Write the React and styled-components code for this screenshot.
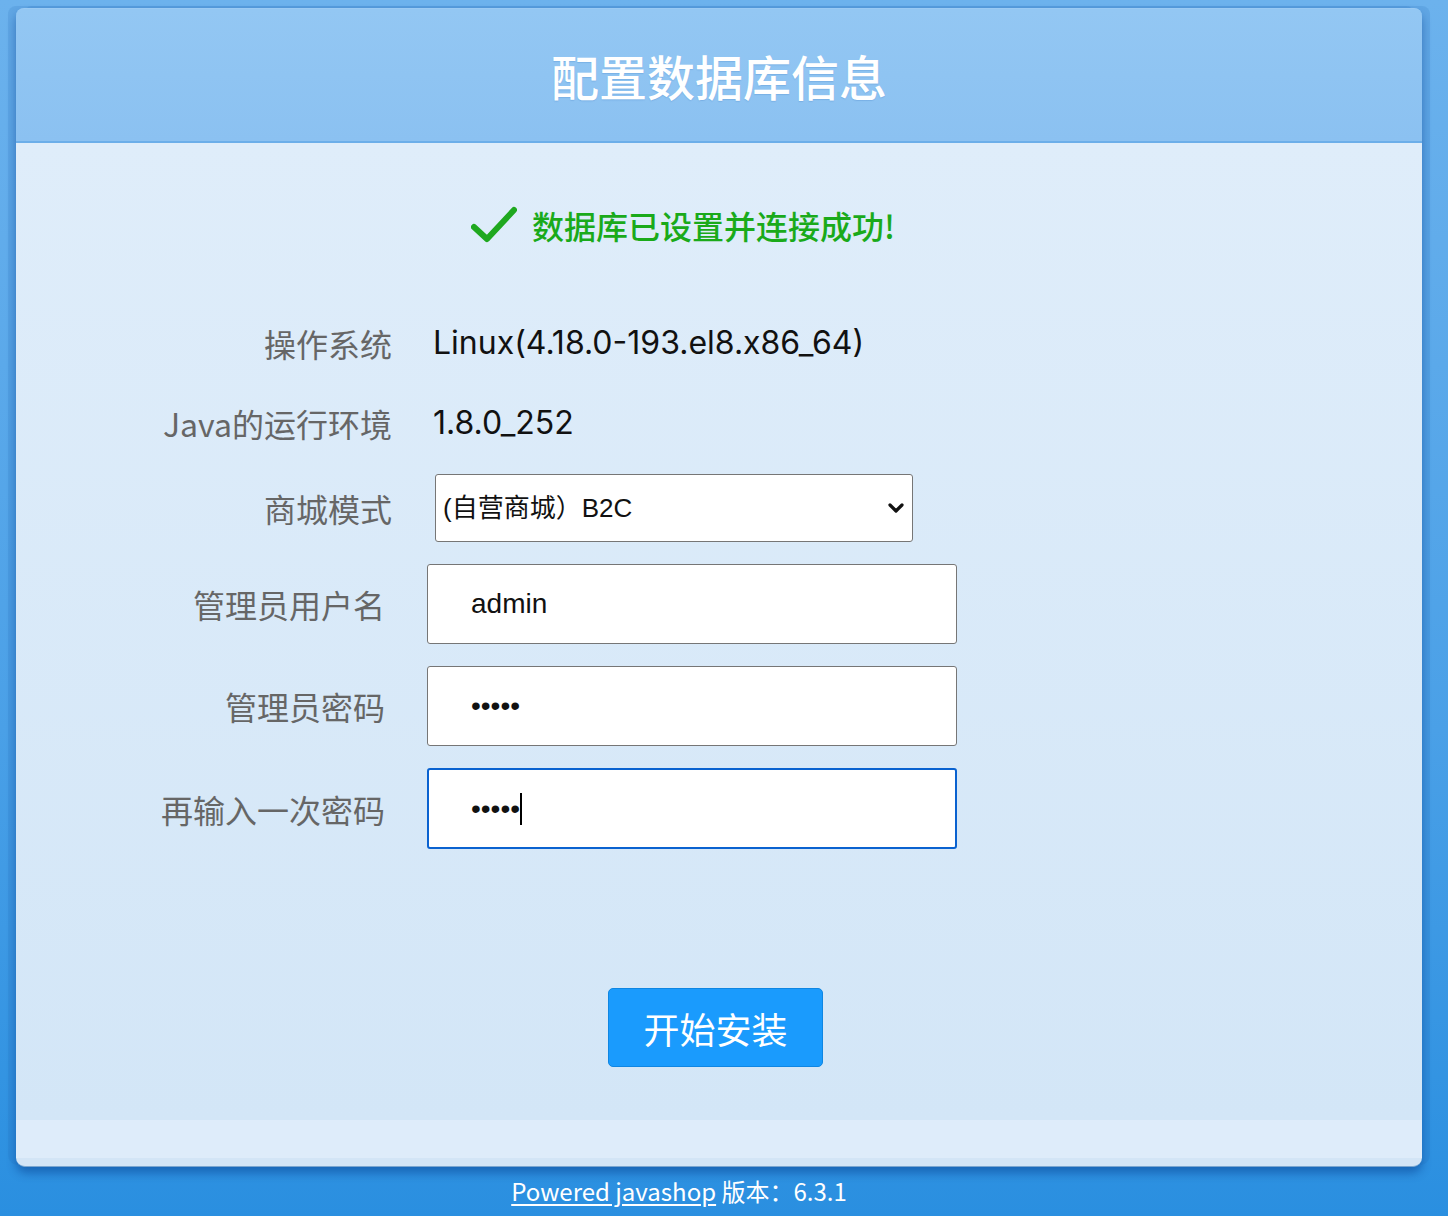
import React from "react";
import styled, { createGlobalStyle } from "styled-components";

const GlobalStyle = createGlobalStyle`
  html, body {
    margin: 0;
    padding: 0;
  }
  body {
    min-height: 1216px;
    background: linear-gradient(180deg, #6cb2ed 0%, #4aa0e7 60%, #2a8fe0 100%);
    font-family: "Noto Sans CJK SC", "Noto Sans", sans-serif;
  }
  * { box-sizing: border-box; }
`;

const Page = styled.div`
  width: 1448px;
  min-height: 1216px;
  padding: 8px 26px 0 16px;
  display: flex;
  flex-direction: column;
`;

const Card = styled.div`
  width: 1406px;
  border-radius: 8px 8px 10px 10px;
  display: flex;
  flex-direction: column;
  box-shadow:
    -8px -2px 0 0 rgba(30, 100, 180, 0.14),
    8px -2px 0 0 rgba(30, 100, 180, 0.14),
    0 6px 10px rgba(0, 50, 130, 0.45);
`;

const Header = styled.div`
  height: 135px;
  border-radius: 8px 8px 0 0;
  background: linear-gradient(180deg, #93c7f3 0%, #8fc4f2 50%, #8bc1f1 100%);
  border-top: 1px solid #9bcbf4;
  border-bottom: 2px solid #6caee9;
  display: flex;
  align-items: center;
  justify-content: center;
`;

const Title = styled.h1`
  margin: 0;
  font-size: 48px;
  font-weight: 500;
  color: #ffffff;
  line-height: 1;
  text-shadow: 0 1px 1px rgba(60, 120, 190, 0.25);
`;

const Body = styled.div`
  background: linear-gradient(180deg, #dfedfa 0%, #d3e6f7 100%);
  padding: 62px 0 53px;
  display: flex;
  flex-direction: column;
`;

const Status = styled.div`
  display: flex;
  align-items: center;
  justify-content: center;
  gap: 15px;
  padding-right: 72px;
  height: 40px;
`;

const StatusText = styled.span`
  font-size: 32px;
  font-weight: 500;
  color: #1aaa1a;
  line-height: 40px;
`;

const Form = styled.div`
  margin-top: 69px;
  display: flex;
  flex-direction: column;
  gap: 22px;
`;

const Row = styled.div`
  display: grid;
  grid-template-columns: ${(p) => p.$labelWidth}px ${(p) => p.$fieldWidth}px;
  column-gap: ${(p) => p.$gap}px;
  align-items: center;
  height: ${(p) => p.$height}px;
`;

const Label = styled.span`
  text-align: right;
  font-size: 32px;
  color: #666666;
  line-height: 1;
  white-space: nowrap;
`;

const Value = styled.span`
  font-family: Inter, "Noto Sans CJK SC", sans-serif;
  font-size: 32px;
  color: #111111;
  line-height: 1;
  white-space: nowrap;
`;

const SelectWrap = styled.div`
  position: relative;
  width: 478px;
  height: 68px;
`;

const Select = styled.select`
  appearance: none;
  -webkit-appearance: none;
  width: 100%;
  height: 100%;
  border: 1px solid #767676;
  border-radius: 3px;
  background: #ffffff;
  padding: 0 40px 0 7px;
  font-family: "Liberation Sans", "Noto Sans CJK SC", sans-serif;
  font-size: 26px;
  color: #111;
  outline: none;
`;

const Chevron = styled.svg`
  position: absolute;
  right: 7px;
  top: 50%;
  transform: translateY(-50%);
  pointer-events: none;
`;

const InputWrap = styled.div`
  position: relative;
  width: 530px;
`;

const TextInput = styled.input`
  display: block;
  width: 530px;
  height: ${(p) => (p.$focused ? 81 : 80)}px;
  border: ${(p) => (p.$focused ? "2px solid #0a62d0" : "1px solid #767676")};
  border-radius: 3px;
  background: #ffffff;
  padding: 0 0 0 ${(p) => (p.$focused ? 42 : 43)}px;
  font-family: "Liberation Sans", "Noto Sans CJK SC", sans-serif;
  font-size: 28px;
  color: #111;
  outline: none;
  caret-color: transparent;
`;

const Caret = styled.span`
  position: absolute;
  left: ${(p) => p.$left}px;
  top: 25px;
  width: 2px;
  height: 32px;
  background: #000;
  pointer-events: none;
`;

const Actions = styled.div`
  margin-top: 140px;
  display: flex;
  justify-content: center;
  padding-right: 7px;
`;

const InstallButton = styled.button`
  width: 215px;
  height: 79px;
  background: #1a9bfd;
  border: 1px solid #0f86e2;
  border-radius: 5px;
  color: #ffffff;
  font-family: "Noto Sans CJK SC", sans-serif;
  font-size: 36px;
  font-weight: 400;
  cursor: pointer;
  padding: 0;
`;

const BodyFoot = styled.div`
  height: 38px;
  background: #deecfa;
`;

const BottomEdge = styled.div`
  height: 9px;
  background: #d3e5f6;
  border-radius: 0 0 10px 10px;
  border-bottom: 1px solid #7aa6d0;
`;

const Footer = styled.div`
  margin-top: 8px;
  width: 1406px;
  padding-right: 80px;
  text-align: center;
  font-family: "Noto Sans CJK SC", sans-serif;
  font-size: 24px;
  line-height: 32px;
  color: #ffffff;
`;

const FooterLink = styled.a`
  color: #ffffff;
  text-decoration: underline;
  text-underline-offset: 3px;
`;

function CheckIcon() {
  return (
    <svg width="46" height="38" viewBox="0 0 46 38">
      <polyline
        points="3,21 16,33 43,4"
        fill="none"
        stroke="#1fa81f"
        strokeWidth="6"
        strokeLinecap="round"
        strokeLinejoin="round"
      />
    </svg>
  );
}

export default function App() {
  return (
    <>
      <GlobalStyle />
      <Page>
        <Card>
          <Header>
            <Title>配置数据库信息</Title>
          </Header>
          <Body>
            <Status>
              <CheckIcon />
              <StatusText>数据库已设置并连接成功!</StatusText>
            </Status>
            <Form>
              <Row $labelWidth={376} $fieldWidth={600} $gap={41} $height={58}>
                <Label>操作系统</Label>
                <Value>Linux(4.18.0-193.el8.x86_64)</Value>
              </Row>
              <Row $labelWidth={376} $fieldWidth={600} $gap={41} $height={58}>
                <Label>Java的运行环境</Label>
                <Value>1.8.0_252</Value>
              </Row>
              <Row $labelWidth={376} $fieldWidth={478} $gap={43} $height={68}>
                <Label>商城模式</Label>
                <SelectWrap>
                  <Select defaultValue="b2c">
                    <option value="b2c">(自营商城）B2C</option>
                    <option value="b2b2c">(多店铺）B2B2C</option>
                  </Select>
                  <Chevron width="20" height="14" viewBox="0 0 20 14">
                    <polyline
                      points="4,4 10,10 16,4"
                      fill="none"
                      stroke="#111"
                      strokeWidth="3.2"
                      strokeLinecap="round"
                      strokeLinejoin="round"
                    />
                  </Chevron>
                </SelectWrap>
              </Row>
              <Row $labelWidth={369} $fieldWidth={530} $gap={42} $height={80}>
                <Label>管理员用户名</Label>
                <TextInput type="text" defaultValue="admin" />
              </Row>
              <Row $labelWidth={369} $fieldWidth={530} $gap={42} $height={80}>
                <Label>管理员密码</Label>
                <TextInput type="password" defaultValue="admin" />
              </Row>
              <Row $labelWidth={369} $fieldWidth={530} $gap={42} $height={80}>
                <Label>再输入一次密码</Label>
                <InputWrap>
                  <TextInput type="password" defaultValue="admin" $focused />
                  <Caret $left={93} />
                </InputWrap>
              </Row>
            </Form>
            <Actions>
              <InstallButton type="button">开始安装</InstallButton>
            </Actions>
          </Body>
          <BodyFoot />
          <BottomEdge />
        </Card>
        <Footer>
          <FooterLink href="#">Powered javashop</FooterLink> 版本：6.3.1
        </Footer>
      </Page>
    </>
  );
}
